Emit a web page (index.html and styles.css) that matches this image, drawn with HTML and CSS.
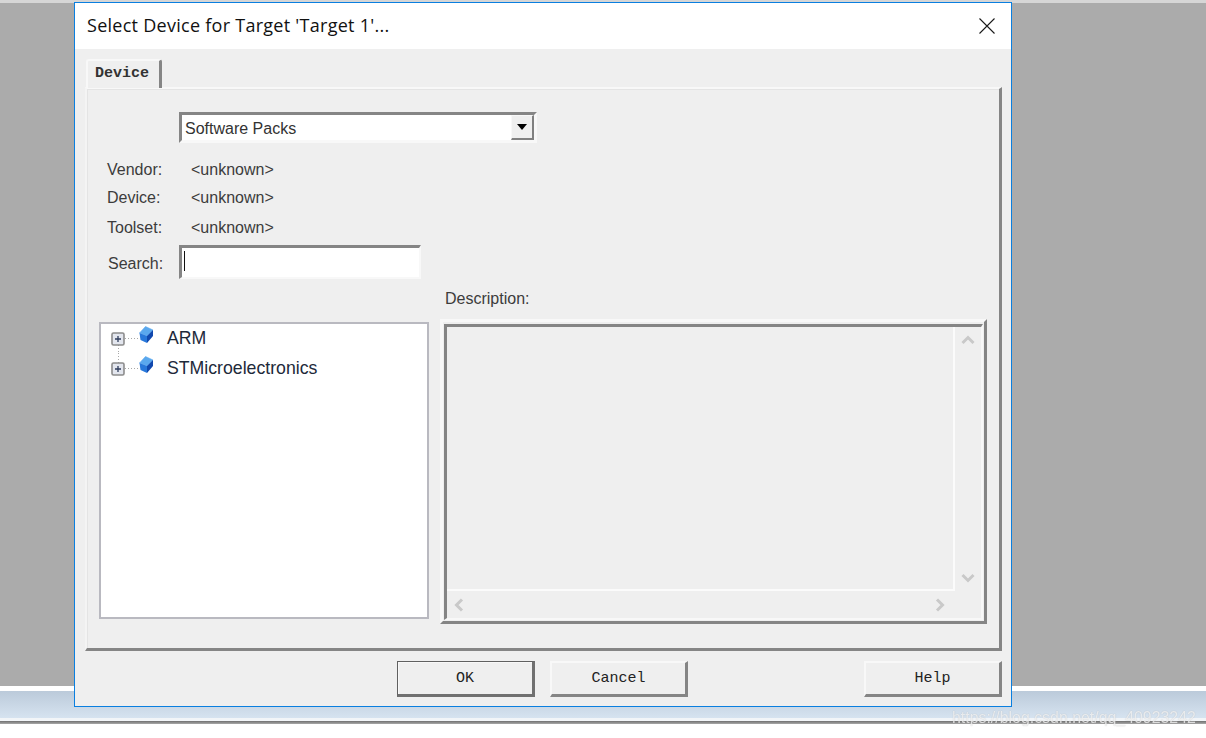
FILE: index.html
```html
<!DOCTYPE html>
<html lang="en">
<head>
<meta charset="utf-8">
<title>Select Device for Target</title>
<link rel="stylesheet" href="styles.css">
</head>
<body>
<div class="desktop">
  <div class="strip-top"></div>
  <div class="workspace"></div>
  <div class="strip-white"></div>
  <div class="strip-status"></div>
  <div class="strip-gap"></div>
  <div class="strip-line"></div>

  <div class="dialog">
    <header class="titlebar">
      <span class="title">Select Device for Target 'Target 1'...</span>
      <svg class="close" width="16" height="16" viewBox="0 0 16 16"><path d="M0.5 0.5L15.5 15.5M15.5 0.5L0.5 15.5" stroke="#1a1a1a" stroke-width="1.1" fill="none"/></svg>
    </header>
    <div class="body">
      <div class="tabs"><div class="tab">Device</div></div>
      <section class="panel">
        <div class="combo">
          <span class="combo-text">Software Packs</span>
          <span class="combo-btn"><svg width="10" height="6" viewBox="0 0 10 6"><path d="M0 0H10L5 6Z" fill="#000"/></svg></span>
        </div>
        <div class="info">
          <div class="info-row r1"><span class="label">Vendor:</span><span class="value">&lt;unknown&gt;</span></div>
          <div class="info-row r1"><span class="label">Device:</span><span class="value">&lt;unknown&gt;</span></div>
          <div class="info-row r2"><span class="label">Toolset:</span><span class="value">&lt;unknown&gt;</span></div>
        </div>
        <div class="search">
          <span class="label search-label">Search:</span>
          <div class="search-box"><span class="caret"></span></div>
        </div>
        <div class="lower">
          <div class="tree">
            <div class="tree-row">
              <svg class="tree-icon" width="54" height="30" viewBox="0 0 54 30">
                <path d="M17.5 22V30" stroke="#a8a8a8" stroke-dasharray="1 2" fill="none"/>
                <path d="M24 15.5H37" stroke="#a8a8a8" stroke-dasharray="1 2" fill="none"/>
                <rect x="11" y="10" width="12" height="12" rx="1.5" fill="#e3e6ee" stroke="#8c8c8c" stroke-width="1.6"/>
                <path d="M14 16H20M17 13V19" stroke="#2f3d5c" stroke-width="1.3" fill="none"/>
                <path d="M44.5 3.5L52 7L46 13L38.5 10Z" fill="#5aa8ee" stroke="#5aa8ee" stroke-width=".6" stroke-linejoin="round"/>
                <path d="M46 13L52 7V13L46 20Z" fill="#1048ae"/>
                <path d="M38.5 10L46 13V20L39.5 17Z" fill="#2878da"/>
              </svg>
              <span class="tree-text">ARM</span>
            </div>
            <div class="tree-row">
              <svg class="tree-icon" width="54" height="30" viewBox="0 0 54 30">
                <path d="M17.5 0V10" stroke="#a8a8a8" stroke-dasharray="1 2" fill="none"/>
                <path d="M24 15.5H37" stroke="#a8a8a8" stroke-dasharray="1 2" fill="none"/>
                <rect x="11" y="10" width="12" height="12" rx="1.5" fill="#e3e6ee" stroke="#8c8c8c" stroke-width="1.6"/>
                <path d="M14 16H20M17 13V19" stroke="#2f3d5c" stroke-width="1.3" fill="none"/>
                <path d="M44.5 3.5L52 7L46 13L38.5 10Z" fill="#5aa8ee" stroke="#5aa8ee" stroke-width=".6" stroke-linejoin="round"/>
                <path d="M46 13L52 7V13L46 20Z" fill="#1048ae"/>
                <path d="M38.5 10L46 13V20L39.5 17Z" fill="#2878da"/>
              </svg>
              <span class="tree-text">STMicroelectronics</span>
            </div>
          </div>
          <div class="desc">
            <div class="label desc-label">Description:</div>
            <div class="desc-outer">
              <div class="desc-inner">
                <div class="desc-text"></div>
                <div class="vbar">
                  <svg width="14" height="10" viewBox="0 0 14 10"><path d="M1.5 8L7 2.5L12.5 8" stroke="#c9c9c9" stroke-width="3" fill="none"/></svg>
                  <svg width="14" height="10" viewBox="0 0 14 10"><path d="M1.5 2L7 7.5L12.5 2" stroke="#c9c9c9" stroke-width="3" fill="none"/></svg>
                </div>
                <div class="hbar">
                  <svg width="10" height="14" viewBox="0 0 10 14"><path d="M8 1.5L2.5 7L8 12.5" stroke="#c9c9c9" stroke-width="3" fill="none"/></svg>
                  <svg width="10" height="14" viewBox="0 0 10 14"><path d="M2 1.5L7.5 7L2 12.5" stroke="#c9c9c9" stroke-width="3" fill="none"/></svg>
                </div>
              </div>
            </div>
          </div>
        </div>
      </section>
      <footer class="buttons">
        <button class="btn btn-default" type="button">OK</button>
        <button class="btn" type="button">Cancel</button>
        <span class="btn-spacer"></span>
        <button class="btn" type="button">Help</button>
      </footer>
    </div>
  </div>

  <div class="watermark">https://blog.csdn.net/qq_40923242</div>
</div>
</body>
</html>
```
FILE: styles.css
```css
* { box-sizing: border-box; }
html, body { margin: 0; padding: 0; background: #fff; }
body { font-family: "Liberation Sans", Arial, sans-serif; color: #222; overflow: hidden; }

.desktop { position: relative; width: 1206px; height: 738px; overflow: hidden; filter: blur(0.35px); }
.strip-top { height: 3px; background: #d6d6d6; }
.workspace { height: 683px; background: #ababab; }
.strip-white { height: 5px; background: #fff; }
.strip-status { height: 27px; background: linear-gradient(#bbcada, #d6e3f0); }
.strip-gap { height: 3px; background: #f2f5f8; }
.strip-line { height: 3px; background: linear-gradient(#6f6f6f, #a9a9a9); }

.dialog {
  position: absolute; left: 74px; top: 2px; width: 938px; height: 705px;
  border: 1px solid #0a7fe0; background: #efefef;
  display: flex; flex-direction: column;
}
.titlebar {
  height: 46px; flex: none; background: #fff;
  display: flex; align-items: center; justify-content: space-between;
  padding: 0 16px 2px 12px;
}
.title { font: 18px "Open Sans", "Noto Sans", sans-serif; color: #111; letter-spacing: 0.27px; }
.close { display: block; margin-top: 2px; }

.body { flex: 1; display: flex; flex-direction: column; padding: 10px 9px 9px 10px; }
.tabs { display: flex; height: 28px; flex: none; position: relative; z-index: 1; }
.tab {
  width: 76px; height: 29px; margin-left: 1px; background: #efefef;
  border-top: 2px solid #f8f8f8; border-left: 2px solid #f8f8f8; border-right: 3px solid #858585;
  border-top-left-radius: 3px; border-top-right-radius: 3px;
  font: bold 15px/25px "Liberation Mono", monospace; color: #333; padding-left: 7px;
}
.panel {
  height: 564px; flex: none;
  border-top: 2px solid #f8f8f8; border-left: 2px solid #f4f4f4;
  border-right: 3px solid #858585; border-bottom: 3px solid #858585;
  padding-top: 23px;
  box-shadow: inset 0 1px 0 #e4e4e4, inset 1px 0 0 #e4e4e4;
}

.combo {
  width: 358px; height: 31px; margin-left: 92px;
  background: #fff;
  border-top: 3px solid #858585; border-left: 3px solid #858585;
  border-right: 3px solid #f8f8f8; border-bottom: 3px solid #f8f8f8;
  display: flex; align-items: center; justify-content: space-between;
}
.combo-text { font-size: 16px; padding: 2px 0 0 3px; color: #333; }
.combo-btn {
  width: 23px; height: 25px; background: #efefef;
  border-top: 1px solid #f8f8f8; border-left: 1px solid #f8f8f8;
  border-right: 2px solid #808080; border-bottom: 2px solid #808080;
  display: flex; align-items: center; justify-content: center;
}
.combo-btn svg { display: block; }

.info { margin-top: 12px; margin-left: 20px; }
.info-row { display: flex; align-items: center; font-size: 16px; padding-top: 2px; }
.r1 { height: 28px; }
.r2 { height: 32px; }
.label { color: #3c3c3c; font-size: 16px; }
.info-row .label { width: 84px; }
.value { color: #3c3c3c; }

.search { display: flex; align-items: center; height: 34px; margin-top: 2px; margin-left: 21px; }
.search-label { width: 71px; padding-top: 4px; }
.search-box {
  width: 242px; height: 34px; background: #fff;
  border-top: 3px solid #858585; border-left: 3px solid #858585;
  border-right: 2px solid #f8f8f8; border-bottom: 2px solid #f8f8f8;
  padding: 3px 0 0 2px;
}
.caret { display: block; width: 1px; height: 20px; background: #111; }

.lower { display: flex; align-items: flex-start; margin-left: 12px; margin-top: 9px; column-gap: 11px; }
.tree {
  width: 330px; height: 297px; margin-top: 34px; background: #fff;
  border: 2px solid #b9b9c0;
}
.tree-row { display: flex; align-items: center; height: 30px; column-gap: 12px; margin-top: -1px; margin-bottom: 1px; }
.tree-icon { display: block; flex: none; }
.tree-text { font-size: 17.7px; color: #1e2a3a; }

.desc { width: 547px; }
.desc-label { height: 21px; margin-left: 5px; line-height: 21px; margin-bottom: 10px; }
.desc-outer {
  width: 547px; height: 305px;
  border-top: 3px solid #f8f8f8; border-left: 3px solid #f8f8f8;
  border-right: 3px solid #858585; border-bottom: 3px solid #858585;
  padding: 2px 1px 1px 1px;
}
.desc-inner {
  height: 100%;
  border-top: 3px solid #858585; border-left: 3px solid #858585;
  border-right: 2px solid #f8f8f8; border-bottom: 2px solid #f8f8f8;
  display: grid; grid-template-columns: 508px 1fr; grid-template-rows: 264px 1fr;
}
.desc-text { border-right: 2px solid #fbfbfb; border-bottom: 2px solid #fbfbfb; }
.vbar { display: flex; flex-direction: column; justify-content: space-between; align-items: center; padding: 8px 0 7px; grid-row: 1 / span 2; grid-column: 2; height: 263px; }
.hbar { display: flex; justify-content: space-between; align-items: center; padding: 0 10px 0 7px; grid-row: 2; grid-column: 1; }
.vbar svg, .hbar svg { display: block; }

.buttons { display: flex; margin-top: 10px; height: 36px; }
.btn {
  width: 138px; height: 36px; padding: 0; background: #efefef;
  border-top: 2px solid #f8f8f8; border-left: 2px solid #f8f8f8;
  border-right: 3px solid #858585; border-bottom: 3px solid #858585;
  font: 15px/1 "Liberation Mono", monospace; color: #222;
  margin-left: 15px;
}
.btn:first-child { margin-left: 312px; }
.btn-spacer { width: 161px; flex: none; }
.btn-spacer + .btn { margin-left: 15px; }
.btn-default { border: 1px solid #606060; border-right: 3px solid #707070; border-bottom: 3px solid #707070; box-shadow: inset 1px 1px 0 #f8f8f8; }

.watermark {
  position: absolute; left: 952px; top: 709px;
  font: 15.9px/18px "Liberation Sans", sans-serif; color: rgba(255,255,255,.72);
  text-shadow: 0 0 1px rgba(120,120,120,.45);
  white-space: nowrap;
}
```
